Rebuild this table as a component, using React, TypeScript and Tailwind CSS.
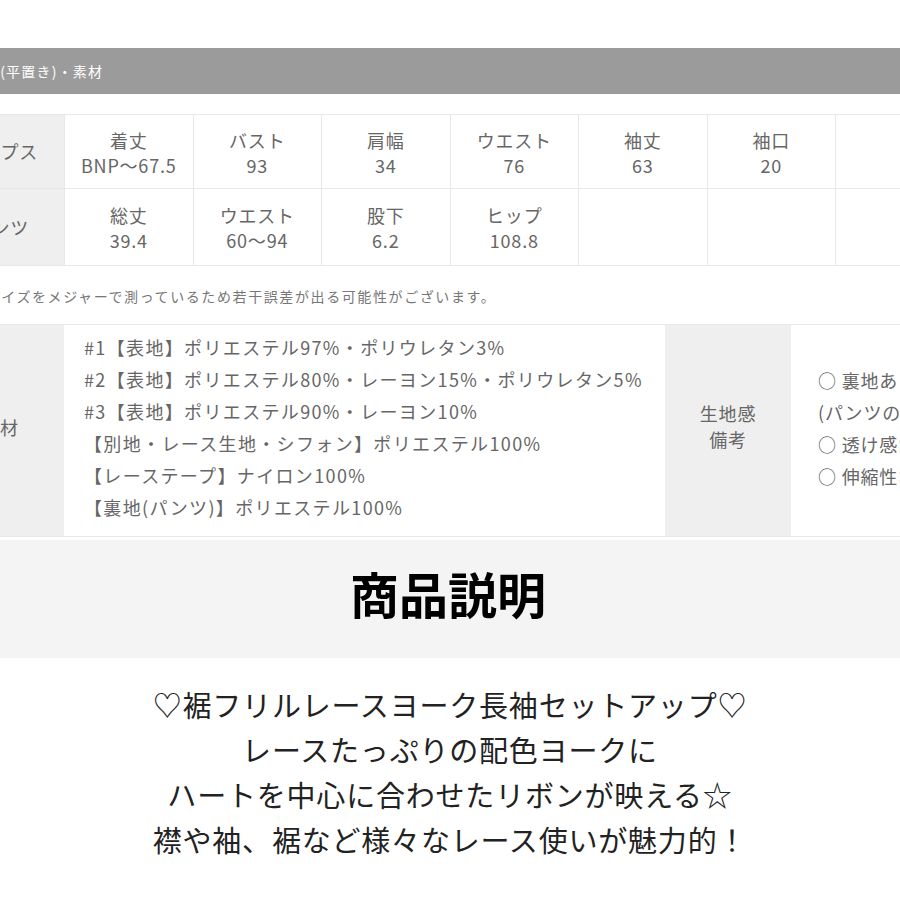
const FONT = "font-['Noto_Sans_CJK_JP','Noto_Sans',sans-serif]";

const TOP_ROWS = [
  {
    label: "トップス",
    h: "h-[74px] pt-[3px]",
    cells: [
      ["着丈", "BNP〜67.5"],
      ["バスト", "93"],
      ["肩幅", "34"],
      ["ウエスト", "76"],
      ["袖丈", "63"],
      ["袖口", "20"],
      null,
      null,
    ],
  },
  {
    label: "パンツ",
    h: "h-[77px] pt-[1px]",
    cells: [
      ["総丈", "39.4"],
      ["ウエスト", "60〜94"],
      ["股下", "6.2"],
      ["ヒップ", "108.8"],
      null,
      null,
      null,
      null,
    ],
  },
];

const MATERIALS = [
  "#1【表地】ポリエステル97%・ポリウレタン3%",
  "#2【表地】ポリエステル80%・レーヨン15%・ポリウレタン5%",
  "#3【表地】ポリエステル90%・レーヨン10%",
  "【別地・レース生地・シフォン】ポリエステル100%",
  "【レーステープ】ナイロン100%",
  "【裏地(パンツ)】ポリエステル100%",
];

const NOTES = ["○ 裏地あり", "(パンツのみ)", "○ 透け感なし", "○ 伸縮性なし"];

const DESCRIPTION = [
  "♡裾フリルレースヨーク長袖セットアップ♡",
  "レースたっぷりの配色ヨークに",
  "ハートを中心に合わせたリボンが映える☆",
  "襟や袖、裾など様々なレース使いが魅力的！",
];

export default function App() {
  return (
    <div className={`w-[900px] h-[900px] overflow-hidden bg-white pt-[48px] ${FONT}`}>
      {/* サイズ表（左側ははみ出し） */}
      <div className="-ml-[64px] w-[1200px]">
        <div className="h-[46px] bg-[#9b9b9b] pl-[19px] flex items-center text-[14px] tracking-[1.2px] text-white">
          サイズ(平置き)・素材
        </div>

        <div className="mt-[20px] border-t border-l border-[#e8e8e8] w-fit">
          {TOP_ROWS.map((row) => (
            <div key={row.label} className="flex">
              <div className="w-[128px] shrink-0 bg-[#efefef] border-r border-b border-[#e8e8e8] flex items-center justify-center text-[18px] tracking-[0.8px] text-[#666]">
                {row.label}
              </div>
              {row.cells.map((c, i) => (
                <div
                  key={i}
                  className={`w-[128.5px] shrink-0 border-r border-b border-[#e8e8e8] flex flex-col items-center justify-center text-[18px] tracking-[0.8px] leading-[25px] text-[#666] ${row.h}`}
                >
                  {c && (
                    <>
                      <span>{c[0]}</span>
                      <span>{c[1]}</span>
                    </>
                  )}
                </div>
              ))}
            </div>
          ))}
        </div>

        <p className="mt-[20px] pl-[34px] text-[14px] leading-[20px] tracking-[1.6px] text-[#777]">
          ※サイズをメジャーで測っているため若干誤差が出る可能性がございます。
        </p>

        {/* 素材 */}
        <div className="mt-[18px] flex h-[213px] border-t border-b border-[#e8e8e8]">
          <div className="w-[128px] shrink-0 bg-[#efefef] flex items-center justify-center pb-[6px] text-[18px] text-[#666]">
            素材
          </div>
          <div className="w-[601px] shrink-0 flex flex-col justify-center pl-[20px] pb-[8px] text-[18px] tracking-[1.35px] leading-[32px] text-[#666]">
            {MATERIALS.map((m) => (
              <span key={m}>{m}</span>
            ))}
          </div>
          <div className="w-[126px] shrink-0 bg-[#efefef] flex flex-col items-center justify-center pb-[10px] text-[18px] tracking-[0.8px] leading-[26px] text-[#666]">
            <span>生地感</span>
            <span>備考</span>
          </div>
          <div className="flex-1 flex flex-col justify-center pl-[27px] pb-[6px] text-[18px] tracking-[0.8px] leading-[32px] text-[#666] whitespace-nowrap">
            {NOTES.map((n) => (
              <span key={n}>{n}</span>
            ))}
          </div>
        </div>
      </div>

      {/* 商品説明 */}
      <div className="mt-[3px] h-[118px] bg-[#f4f4f4] flex items-center justify-center pb-[13px]">
        <h2 className="text-[49px] font-bold text-black leading-none pr-[4px]">商品説明</h2>
      </div>

      <div className="pt-[24px] flex flex-col items-center text-[29px] leading-[45px] tracking-[0.8px] text-[#222]">
        {DESCRIPTION.map((d) => (
          <p key={d}>{d}</p>
        ))}
      </div>
    </div>
  );
}
